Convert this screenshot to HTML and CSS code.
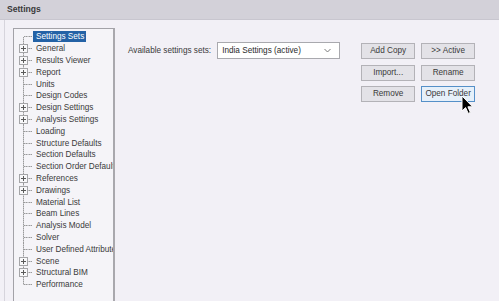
FILE: index.html
```html
<!DOCTYPE html>
<html>
<head>
<meta charset="utf-8">
<link rel="stylesheet" href="styles.css">
</head>
<body>
<div class="window">
  <div class="titlebar">Settings</div>
  <div class="content">
    <div class="tree">
      <ul class="nodes">
        <li class="node first"><span class="gut"><span class="noexp"></span><span class="tick"></span></span><span class="label sel">Settings Sets</span></li>
        <li class="node"><span class="gut"><span class="exp"></span><span class="tick"></span></span><span class="label">General</span></li>
        <li class="node"><span class="gut"><span class="exp"></span><span class="tick"></span></span><span class="label">Results Viewer</span></li>
        <li class="node"><span class="gut"><span class="exp"></span><span class="tick"></span></span><span class="label">Report</span></li>
        <li class="node"><span class="gut"><span class="noexp"></span><span class="tick"></span></span><span class="label">Units</span></li>
        <li class="node"><span class="gut"><span class="noexp"></span><span class="tick"></span></span><span class="label">Design Codes</span></li>
        <li class="node"><span class="gut"><span class="exp"></span><span class="tick"></span></span><span class="label">Design Settings</span></li>
        <li class="node"><span class="gut"><span class="exp"></span><span class="tick"></span></span><span class="label">Analysis Settings</span></li>
        <li class="node"><span class="gut"><span class="noexp"></span><span class="tick"></span></span><span class="label">Loading</span></li>
        <li class="node"><span class="gut"><span class="noexp"></span><span class="tick"></span></span><span class="label">Structure Defaults</span></li>
        <li class="node"><span class="gut"><span class="noexp"></span><span class="tick"></span></span><span class="label">Section Defaults</span></li>
        <li class="node"><span class="gut"><span class="noexp"></span><span class="tick"></span></span><span class="label">Section Order Defaults</span></li>
        <li class="node"><span class="gut"><span class="exp"></span><span class="tick"></span></span><span class="label">References</span></li>
        <li class="node"><span class="gut"><span class="exp"></span><span class="tick"></span></span><span class="label">Drawings</span></li>
        <li class="node"><span class="gut"><span class="noexp"></span><span class="tick"></span></span><span class="label">Material List</span></li>
        <li class="node"><span class="gut"><span class="noexp"></span><span class="tick"></span></span><span class="label">Beam Lines</span></li>
        <li class="node"><span class="gut"><span class="noexp"></span><span class="tick"></span></span><span class="label">Analysis Model</span></li>
        <li class="node"><span class="gut"><span class="noexp"></span><span class="tick"></span></span><span class="label">Solver</span></li>
        <li class="node"><span class="gut"><span class="noexp"></span><span class="tick"></span></span><span class="label">User Defined Attributes</span></li>
        <li class="node"><span class="gut"><span class="exp"></span><span class="tick"></span></span><span class="label">Scene</span></li>
        <li class="node"><span class="gut"><span class="exp"></span><span class="tick"></span></span><span class="label">Structural BIM</span></li>
        <li class="node last"><span class="gut"><span class="noexp"></span><span class="tick"></span></span><span class="label">Performance</span></li>
      </ul>
    </div>
    <div class="main">
      <div class="setrow">
        <span class="setlabel">Available settings sets:</span>
        <div class="combo">
          <span class="combo-text">India Settings (active)</span>
          <svg class="chev" width="7" height="5" viewBox="0 0 7 5"><polyline points="0.5,1 3.5,4 6.5,1" fill="none" stroke="#7a7a7a" stroke-width="1"/></svg>
        </div>
      </div>
      <div class="buttons">
        <button class="btn">Add Copy</button>
        <button class="btn">&gt;&gt; Active</button>
        <button class="btn">Import...</button>
        <button class="btn">Rename</button>
        <button class="btn">Remove</button>
        <button class="btn hover">Open Folder</button>
      </div>
    </div>
  </div>
  <svg class="cursor" width="13" height="20" viewBox="0 0 13 20"><path d="M1 1 L1 16 L4.6 12.6 L7.2 18.4 L9.4 17.4 L6.9 11.8 L11.6 11.8 Z" fill="#000" stroke="#fff" stroke-width="1" stroke-linejoin="round"/></svg>
</div>
</body>
</html>
```
FILE: styles.css
```css
* { box-sizing: border-box; }
html, body { margin: 0; padding: 0; }
body {
  width: 499px;
  height: 301px;
  overflow: hidden;
  background: #f2f0f6;
  font-family: "Liberation Sans", Arial, sans-serif;
  font-size: 8.2px;
  color: #3a3a3a;
}
.window {
  position: relative;
  width: 499px;
  height: 301px;
  display: flex;
  flex-direction: column;
  overflow: hidden;
}
.titlebar {
  height: 20px;
  flex: none;
  background: #d3d1d9;
  border-bottom: 1px solid #c8c6cf;
  font-weight: bold;
  font-size: 8.6px;
  color: #3a3a3a;
  padding-left: 7px;
  line-height: 19px;
}
.content {
  flex: 1;
  display: flex;
  margin-left: 4px;
  border-left: 1px solid #d6d4dc;
  padding-left: 8px;
  padding-top: 8px;
  min-height: 0;
  overflow: hidden;
}
.tree {
  width: 102px;
  flex: none;
  border: 1px solid #a3a2a8;
  border-bottom: none;
  border-right: 2px solid #a9a8ad;
  background: #f5f4f8;
  overflow: hidden;
}
.nodes {
  list-style: none;
  margin: 0;
  padding: 2px 0 0 0;
}
.node {
  display: flex;
  align-items: center;
  height: 11.8px;
  white-space: nowrap;
}
.gut {
  flex: none;
  width: 18px;
  height: 100%;
  display: flex;
  align-items: center;
  padding-left: 5px;
  background-image: repeating-linear-gradient(to bottom, #9a9a9a 0 1px, #c4c4c8 1px 2px);
  background-size: 1px 100%;
  background-repeat: no-repeat;
  background-position: 9px 0;
}
.first .gut {
  background-size: 1px 50%;
  background-position: 9px 100%;
}
.last .gut {
  background-size: 1px 50%;
  background-position: 9px 0;
}
.exp {
  flex: none;
  width: 9px;
  height: 9px;
  border: 1px solid #a5a5a8;
  background:
    linear-gradient(#5a5a5a, #5a5a5a) center / 5px 1px no-repeat,
    linear-gradient(#5a5a5a, #5a5a5a) center / 1px 5px no-repeat,
    #f8f8fa;
}
.noexp {
  flex: none;
  width: 9px;
  height: 1px;
  background: repeating-linear-gradient(to right, #9a9a9a 0 1px, #c4c4c8 1px 2px) 5px 0 / 4px 1px no-repeat;
}
.tick {
  flex: 1;
  height: 1px;
  background: repeating-linear-gradient(to right, #c4c4c8 0 1px, #9a9a9a 1px 2px);
}
.label {
  padding: 0 2px 0 3px;
  margin-left: 1px;
  line-height: 11px;
}
.label.sel {
  background: #2462a6;
  color: #fff;
}
.main {
  flex: 1;
  display: flex;
  align-items: flex-start;
  padding-left: 13px;
  padding-top: 14px;
}
.setrow {
  display: flex;
  align-items: center;
  gap: 6px;
}
.combo {
  width: 123px;
  height: 17px;
  background: #fff;
  border: 1px solid #a9a9ae;
  display: flex;
  align-items: center;
  justify-content: space-between;
  padding: 0 8px 0 4px;
}
.combo-text { color: #2a2a2a; }
.chev { display: block; }
.buttons {
  margin-left: 21px;
  margin-top: 1px;
  display: grid;
  grid-template-columns: 54px 54px;
  grid-auto-rows: 16px;
  column-gap: 6px;
  row-gap: 5.5px;
}
.btn {
  font-family: inherit;
  font-size: inherit;
  color: #3a3a3a;
  background: #e3e2e7;
  border: 1px solid #b3b2b7;
  padding: 0;
  margin: 0;
  line-height: 14px;
}
.btn.hover {
  background: #e6f0fa;
  border-color: #5590c8;
}
.cursor {
  position: absolute;
  left: 461px;
  top: 95px;
}
```
